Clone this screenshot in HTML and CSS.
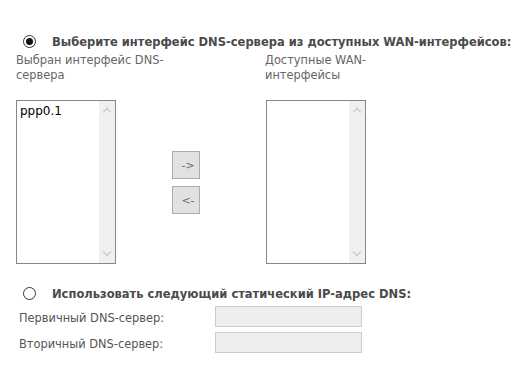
FILE: index.html
```html
<!DOCTYPE html>
<html lang="ru">
<head>
  <meta charset="UTF-8">
  <title>DNS</title>
  <link rel="stylesheet" href="styles.css">
</head>
<body>
  <div class="page">
    <div class="option-row">
      <span class="radio checked"></span>
      <span class="option-title">Выберите интерфейс DNS-сервера из доступных WAN-интерфейсов:</span>
    </div>

    <div class="picker">
      <div class="col col-left">
        <div class="col-label">Выбран интерфейс DNS-сервера</div>
        <div class="listbox">
          <div class="list-items">
            <div class="list-item">ppp0.1</div>
          </div>
          <div class="scrollbar">
            <span class="chev up"></span>
            <span class="chev down"></span>
          </div>
        </div>
      </div>

      <div class="col col-mid">
        <button class="move-btn">-&gt;</button>
        <button class="move-btn">&lt;-</button>
      </div>

      <div class="col col-right">
        <div class="col-label">Доступные WAN-интерфейсы</div>
        <div class="listbox">
          <div class="list-items"></div>
          <div class="scrollbar">
            <span class="chev up"></span>
            <span class="chev down"></span>
          </div>
        </div>
      </div>
    </div>

    <div class="option-row second">
      <span class="radio"></span>
      <span class="option-title">Использовать следующий статический IP-адрес DNS:</span>
    </div>

    <div class="static-rows">
      <div class="field-row">
        <span class="field-label">Первичный DNS-сервер:</span>
        <input class="field-input" type="text" disabled>
      </div>
      <div class="field-row">
        <span class="field-label">Вторичный DNS-сервер:</span>
        <input class="field-input" type="text" disabled>
      </div>
    </div>
  </div>
</body>
</html>
```

FILE: styles.css
```css
:root {
  --text: #555;
  --title: #4a4a4a;
  --box-border: #828790;
  --scroll-bg: #f0f0f0;
  --chev: #c2c2c2;
  --input-bg: #eeeeee;
  --input-border: #cccccc;
}
body {
  margin: 0;
  font-family: "DejaVu Sans", Verdana, sans-serif;
  font-size: 11.4px;
  color: var(--text);
  background: #fff;
}
.page {
  padding: 33px 0 0 16px;
}
.option-row {
  display: flex;
  align-items: center;
  height: 17px;
  padding-left: 7px;
  white-space: nowrap;
}
.option-row.second {
  margin-top: 21px;
}
.radio {
  flex: none;
  width: 11px;
  height: 11px;
  border: 1px solid #333;
  border-radius: 50%;
  display: flex;
  align-items: center;
  justify-content: center;
  margin-right: 16px;
  background: #fff;
}
.radio.checked::after {
  content: "";
  width: 7px;
  height: 7px;
  border-radius: 50%;
  background: #111;
}
.option-title {
  font-weight: 700;
  font-size: 11.5px;
  color: var(--title);
}
.picker {
  display: flex;
  margin-top: 2px;
}
.col-left {
  width: 156px;
}
.col-mid {
  width: 94px;
  display: flex;
  flex-direction: column;
  gap: 7px;
  padding-top: 99px;
}
.col-right {
  width: 110px;
}
.col-label {
  width: 150px;
  height: 48px;
  line-height: 15px;
  color: #666;
  padding-top: 1px;
  box-sizing: border-box;
}
.col-right .col-label {
  width: 110px;
  margin-left: -1px;
}
.listbox {
  width: 98px;
  height: 162px;
  border: 1px solid var(--box-border);
  display: flex;
  background: #fff;
}
.list-items {
  flex: 1;
  padding: 3px 0 0 3px;
}
.list-item {
  color: #000;
  font-size: 12px;
  line-height: 15px;
}
.scrollbar {
  width: 16px;
  background: var(--scroll-bg);
  display: flex;
  flex-direction: column;
  justify-content: space-between;
  align-items: center;
  padding: 6px 0;
}
.chev {
  width: 5px;
  height: 5px;
  border-left: 1px solid var(--chev);
  border-top: 1px solid var(--chev);
}
.chev.up {
  transform: rotate(45deg);
  margin-top: 2px;
}
.chev.down {
  transform: rotate(225deg);
  margin-bottom: 2px;
}
.move-btn {
  width: 28px;
  height: 28px;
  padding: 0 0 0 4px;
  border: 1px solid #adadad;
  background: #e1e1e1;
  font-family: inherit;
  font-size: 11px;
  color: #6a6a7a;
  border-radius: 0;
}
.static-rows {
  padding: 4px 0 0 3px;
}
.field-row {
  display: flex;
  align-items: center;
  height: 21px;
  margin-bottom: 5px;
}
.field-label {
  width: 196px;
  padding-top: 3px;
  color: var(--text);
}
.field-input {
  width: 147px;
  height: 21px;
  box-sizing: border-box;
  border: 1px solid var(--input-border);
  background: var(--input-bg);
  padding: 0;
  margin: 0;
}
```
